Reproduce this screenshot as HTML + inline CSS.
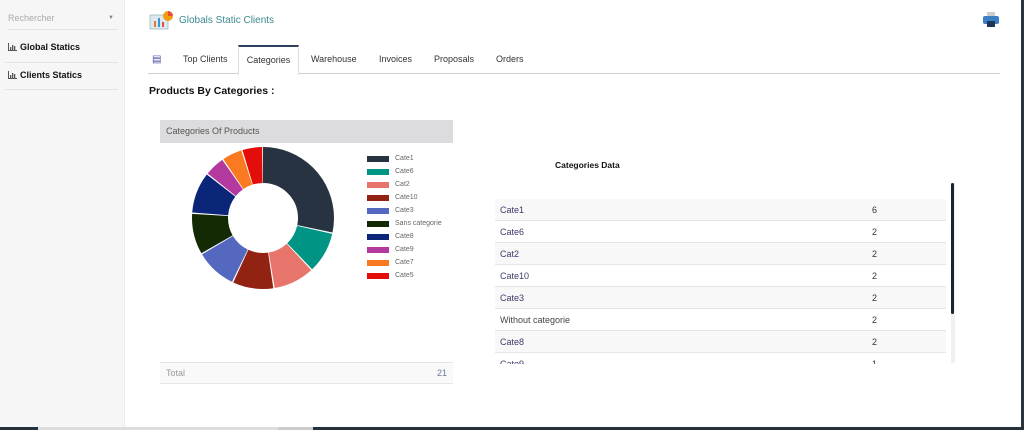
<!DOCTYPE html>
<html><head><style>
*{margin:0;padding:0;box-sizing:border-box}
body{width:1024px;height:430px;overflow:hidden;font-family:"Liberation Sans",sans-serif;background:#fff;position:relative;font-size:9px;color:#333}
.a{position:absolute}
.side{left:0;top:0;width:125px;height:427px;background:#f6f6f6;border-right:1px solid #ececec}
.tab{top:45px;height:29px;line-height:29px;font-size:9px;color:#333}
.row{left:495px;width:451px;height:22px;line-height:22px;border-bottom:1px solid #e6e6e6;font-size:9px;color:#3b3b6b}
.row span{position:absolute;left:377px;color:#333}
.lg{left:367px;font-size:7px;color:#666;height:10px;line-height:8px}
.lg i{display:inline-block;width:22px;height:6px;margin-right:6px;vertical-align:top;margin-top:1px}
.ic{display:inline-block;vertical-align:-1px;margin-right:3px}
</style></head><body>
<div class="a side">
 <div class="a" style="left:8px;top:13px;width:110px;color:#aaa;font-size:9px;padding-bottom:6px;border-bottom:1px solid #e4e4e4">Rechercher<span style="position:absolute;right:4px;font-size:6px;top:2px;color:#888">▼</span></div>
 <div class="a" style="left:8px;top:42px;font-weight:bold;font-size:9px;color:#111"><svg class="ic" width="9" height="8"><path d="M0.5 0V7.5H9" stroke="#555" fill="none"/><rect x="2" y="4" width="1.3" height="3" fill="#555"/><rect x="4" y="2" width="1.3" height="5" fill="#555"/><rect x="6" y="3" width="1.3" height="4" fill="#555"/></svg>Global Statics</div>
 <div class="a" style="left:5px;top:62px;width:113px;border-top:1px solid #e4e4e4"></div>
 <div class="a" style="left:8px;top:70px;font-weight:bold;font-size:9px;color:#111"><svg class="ic" width="9" height="8"><path d="M0.5 0V7.5H9" stroke="#555" fill="none"/><rect x="2" y="4" width="1.3" height="3" fill="#555"/><rect x="4" y="2" width="1.3" height="5" fill="#555"/><rect x="6" y="3" width="1.3" height="4" fill="#555"/></svg>Clients Statics</div>
 <div class="a" style="left:5px;top:89px;width:113px;border-top:1px solid #e4e4e4"></div>
</div>
<svg class="a" style="left:149px;top:9px" width="25" height="24"><rect x="1" y="6" width="18" height="14" fill="#dfe8f0" stroke="#9bb" stroke-width=".8"/><rect x="5" y="12" width="2" height="6" fill="#e67e22"/><rect x="9" y="9" width="2" height="9" fill="#3498db"/><rect x="13" y="13" width="2" height="5" fill="#e74c3c"/><circle cx="19" cy="7" r="5" fill="#f39c12"/><path d="M19 7V2a5 5 0 0 1 5 5z" fill="#e74c3c"/></svg>
<div class="a" style="left:179px;top:15px;font-size:10px;color:#3a8a8f">Globals Static Clients</div>
<svg class="a" style="left:982px;top:11px" width="18" height="18"><rect x="5" y="1" width="8" height="5" fill="#ccc"/><rect x="1" y="5" width="16" height="8" rx="2" fill="#3b7fc4"/><rect x="5" y="10" width="8" height="6" fill="#1d3557"/></svg>
<div class="a" style="left:148px;top:73px;width:852px;border-top:1px solid #cfcfcf"></div>
<div class="a tab" style="left:152px;color:#4a4aa0;font-size:10px">▤</div>
<div class="a tab" style="left:183px">Top Clients</div>
<div class="a tab" style="left:238px;width:61px;height:30px;text-align:center;border:1px solid #ddd;border-top:2px solid #2c3e60;border-bottom:none;background:#fff;line-height:26px">Categories</div>
<div class="a tab" style="left:311px">Warehouse</div>
<div class="a tab" style="left:379px">Invoices</div>
<div class="a tab" style="left:434px">Proposals</div>
<div class="a tab" style="left:496px">Orders</div>
<div class="a" style="left:149px;top:85px;font-weight:bold;font-size:10.5px;color:#111">Products By Categories :</div>
<div class="a" style="left:160px;top:120px;width:293px;height:23px;background:#dcdcde;line-height:23px;padding-left:6px;font-size:9px;color:#555">Categories Of Products</div>
<svg class="a" style="left:192px;top:147px" width="142" height="142" viewBox="0 0 142 142">
<g transform="rotate(-90 71 71)" fill="none" stroke-width="36">
<circle cx="71" cy="71" r="53" stroke="#283342" stroke-dasharray="94.1 400" stroke-dashoffset="0"/>
<circle cx="71" cy="71" r="53" stroke="#009485" stroke-dasharray="30.7 400" stroke-dashoffset="-95.14"/>
<circle cx="71" cy="71" r="53" stroke="#e8756b" stroke-dasharray="30.7 400" stroke-dashoffset="-126.85"/>
<circle cx="71" cy="71" r="53" stroke="#922212" stroke-dasharray="30.7 400" stroke-dashoffset="-158.56"/>
<circle cx="71" cy="71" r="53" stroke="#5468c0" stroke-dasharray="30.7 400" stroke-dashoffset="-190.27"/>
<circle cx="71" cy="71" r="53" stroke="#142a05" stroke-dasharray="30.7 400" stroke-dashoffset="-221.98"/>
<circle cx="71" cy="71" r="53" stroke="#0b2579" stroke-dasharray="30.7 400" stroke-dashoffset="-253.69"/>
<circle cx="71" cy="71" r="53" stroke="#b3399f" stroke-dasharray="14.9 400" stroke-dashoffset="-285.4"/>
<circle cx="71" cy="71" r="53" stroke="#f97a20" stroke-dasharray="14.9 400" stroke-dashoffset="-301.26"/>
<circle cx="71" cy="71" r="53" stroke="#e30e0a" stroke-dasharray="14.9 400" stroke-dashoffset="-317.12"/>
</g></svg>
<div class="a lg" style="top:155px"><i style="background:#283342"></i>Cate1</div>
<div class="a lg" style="top:168px"><i style="background:#009485"></i>Cate6</div>
<div class="a lg" style="top:181px"><i style="background:#e8756b"></i>Cat2</div>
<div class="a lg" style="top:194px"><i style="background:#922212"></i>Cate10</div>
<div class="a lg" style="top:207px"><i style="background:#5468c0"></i>Cate3</div>
<div class="a lg" style="top:220px"><i style="background:#142a05"></i>Sans categorie</div>
<div class="a lg" style="top:233px"><i style="background:#0b2579"></i>Cate8</div>
<div class="a lg" style="top:246px"><i style="background:#b3399f"></i>Cate9</div>
<div class="a lg" style="top:259px"><i style="background:#f97a20"></i>Cate7</div>
<div class="a lg" style="top:272px"><i style="background:#e30e0a"></i>Cate5</div>
<div class="a" style="left:160px;top:362px;width:293px;height:22px;background:#f9f9f9;border-top:1px solid #e6e6e6;border-bottom:1px solid #e6e6e6;line-height:21px;padding:0 6px;color:#999;font-size:9px">Total<span style="float:right;color:#6a7a9a">21</span></div>
<div class="a" style="left:555px;top:160px;font-weight:bold;font-size:8.5px;color:#111">Categories Data</div>
<div class="a" style="left:495px;top:199px;width:451px;height:165px;overflow:hidden">
<div style="position:relative">
<div class="a row" style="left:0;top:0;background:#f8f8f8;padding-left:5px">Cate1<span>6</span></div>
<div class="a row" style="left:0;top:22px;padding-left:5px">Cate6<span>2</span></div>
<div class="a row" style="left:0;top:44px;background:#f8f8f8;padding-left:5px">Cat2<span>2</span></div>
<div class="a row" style="left:0;top:66px;padding-left:5px">Cate10<span>2</span></div>
<div class="a row" style="left:0;top:88px;background:#f8f8f8;padding-left:5px">Cate3<span>2</span></div>
<div class="a row" style="left:0;top:110px;padding-left:5px;color:#444">Without categorie<span>2</span></div>
<div class="a row" style="left:0;top:132px;background:#f8f8f8;padding-left:5px">Cate8<span>2</span></div>
<div class="a row" style="left:0;top:154px;padding-left:5px">Cate9<span>1</span></div>
</div></div>
<div class="a" style="left:951px;top:183px;width:4px;height:180px;background:#f0f0f0"></div>
<div class="a" style="left:951px;top:183px;width:3px;height:131px;background:#1c2430;border-radius:2px"></div>
<div class="a" style="left:1021px;top:0;width:3px;height:430px;background:#2a3540"></div>
<div class="a" style="left:0;top:427px;width:1024px;height:3px;background:#25323c"></div>
<div class="a" style="left:38px;top:427px;width:240px;height:3px;background:#ddd"></div>
<div class="a" style="left:278px;top:427px;width:35px;height:3px;background:#ccc"></div>
</body></html>
